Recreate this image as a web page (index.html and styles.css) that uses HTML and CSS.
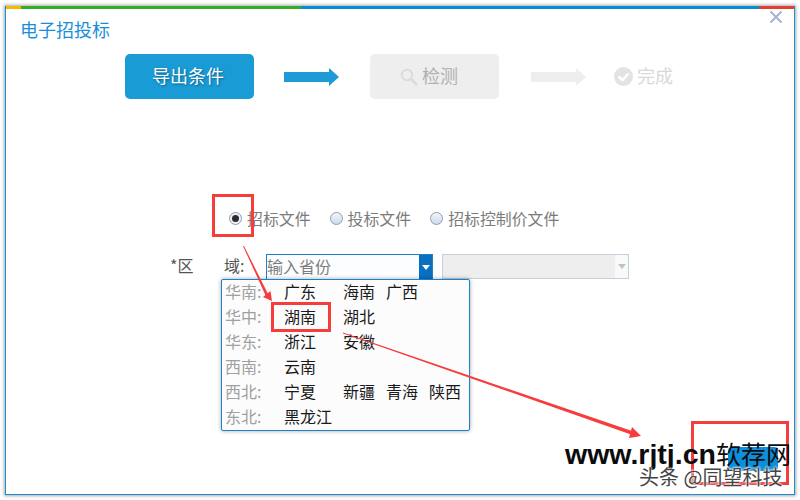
FILE: index.html
```html
<!DOCTYPE html>
<html lang="zh">
<head>
<meta charset="utf-8">
<title>电子招投标</title>
<link rel="stylesheet" href="styles.css">
</head>
<body>
<div class="window">
  <div class="strip"><i class="s-y"></i><i class="s-g"></i><i class="s-b"></i><i class="s-r"></i></div>
  <svg class="close" width="12" height="12" viewBox="0 0 12 12"><path d="M.5 .5L11.5 11.5M11.5 .5L.5 11.5" stroke="#a3b3d1" stroke-width="2"/></svg>
  <h1 class="title">电子招投标</h1>
  <div class="steps">
    <div class="step step-on"><span class="lift">导出条件</span></div>
    <svg class="arrow" width="55" height="18" viewBox="0 0 55 18"><path d="M0 4H45V0L55 9L45 18V14H0Z" fill="#1e9bd7"/></svg>
    <div class="step step-off">
      <svg width="18" height="18" viewBox="0 0 18 18"><circle cx="7" cy="7" r="5.2" fill="none" stroke="#dcdcdc" stroke-width="2"/><path d="M11 11L17 17" stroke="#dcdcdc" stroke-width="2.6"/></svg>
      <span class="lift">检测</span>
    </div>
    <svg class="arrow arrow-off" width="55" height="18" viewBox="0 0 55 18"><path d="M0 4H45V0L55 9L45 18V14H0Z" fill="#eeeeee"/></svg>
    <div class="done">
      <svg width="19" height="19" viewBox="0 0 19 19"><circle cx="9.5" cy="9.5" r="9.5" fill="#e3e3e3"/><path d="M4.5 9.5L8.5 13L14.5 6.5" fill="none" stroke="#fff" stroke-width="2.4"/></svg>
      <span class="lift">完成</span>
    </div>
  </div>
  <div class="radios">
    <label class="radio"><i class="dot dot-on"></i><span class="radio-text">招标文件</span></label>
    <label class="radio"><i class="dot"></i><span class="radio-text">投标文件</span></label>
    <label class="radio"><i class="dot"></i><span class="radio-text">招标控制价文件</span></label>
  </div>
  <div class="form-row">
    <span class="lab-a">*区</span>
    <span class="lab-b">域:</span>
    <div class="combo">
      <span class="combo-text">输入省份</span>
      <span class="combo-btn"><i class="tri"></i></span>
    </div>
    <div class="select-off"><span class="select-btn"><i class="tri tri-off"></i></span></div>
  </div>
  <div class="menu">
    <div class="m-row"><span class="m-lab">华南:</span><span class="c1">广东</span><span class="c2">海南</span><span class="c3">广西</span></div>
    <div class="m-row"><span class="m-lab">华中:</span><span class="c1">湖南</span><span class="c2">湖北</span></div>
    <div class="m-row"><span class="m-lab">华东:</span><span class="c1">浙江</span><span class="c2">安徽</span></div>
    <div class="m-row"><span class="m-lab">西南:</span><span class="c1">云南</span></div>
    <div class="m-row"><span class="m-lab">西北:</span><span class="c1">宁夏</span><span class="c2">新疆</span><span class="c3">青海</span><span class="c4">陕西</span></div>
    <div class="m-row"><span class="m-lab">东北:</span><span class="c1">黑龙江</span></div>
  </div>
  <div class="next"></div>
</div>
<svg class="marks" width="800" height="500" viewBox="0 0 800 500">
  <g fill="none" stroke="#f73c3c" stroke-width="3">
    <rect x="213.5" y="195.5" width="39" height="40"/>
    <rect x="272.5" y="303.5" width="57" height="27"/>
    <rect x="692.5" y="422.5" width="95" height="61"/>
  </g>
  <g fill="#f73c3c">
    <path d="M243 246L244 246L269 296L266.5 297.5Z"/>
    <path d="M272 301L263 297L270.5 291Z"/>
    <path d="M343 332.5L343 333.5L631 434.5L632 431Z"/>
    <path d="M641 436L632 427L629 438Z"/>
  </g>
</svg>
<div class="wm-main"><span class="wm-latin">www.rjtj.cn</span>软荐网</div>
<div class="wm-sub">头条 @同望科技</div>
</body>
</html>
```

FILE: styles.css
```css
* { box-sizing: border-box; }
html, body { margin: 0; padding: 0; background: #fff; }
body {
  width: 800px;
  height: 500px;
  overflow: hidden;
  padding: 6px 5px 5px;
  position: relative;
  font-family: "Microsoft YaHei", "Noto Sans CJK SC", sans-serif;
}
.window {
  position: relative;
  width: 790px;
  height: 489px;
  background: #fff;
  border: 1px solid #1a8fd8;
  border-top: 0;
  box-shadow: 0 0 3px 1px #a8a8a8;
}
.strip { display: flex; height: 3px; }
.strip i { display: block; height: 3px; }
.s-y { width: 15px; background: #f5b800; }
.s-g { width: 280px; background: #35ae27; }
.s-b { width: 458px; background: #0a8ad8; }
.s-r { width: 35px; background: #e23f30; }
.close { position: absolute; top: 5px; right: 12px; }
.title {
  margin: 0;
  padding: 7px 0 0 14px;
  height: 45px;
  font-size: 18px;
  line-height: 26px;
  font-weight: 400;
  color: #1a8fd8;
}
.steps {
  display: flex;
  align-items: center;
  height: 45px;
  padding-left: 119px;
}
.lift { display: block; margin-bottom: 4px; }
.step {
  width: 129px;
  height: 45px;
  border-radius: 5px;
  display: flex;
  align-items: center;
  font-size: 18px;
}
.step-on { background: #199bd6; color: #fff; text-shadow: 1px 1px 2px #0b5f8a; padding-left: 27px; }
.step-off { background: #eeeeee; color: #b0b0b0; gap: 4px; padding-left: 30px; }
.arrow { margin: 0 31px 0 30px; flex: none; }
.arrow-off { margin: 0 28px 0 32px; }
.done { display: flex; align-items: center; gap: 4px; font-size: 18px; color: #d8d8d8; }
.radios {
  display: flex;
  margin-top: 107px;
  height: 24px;
  align-items: center;
  padding-left: 223px;
  font-size: 15.9px;
  color: #7b7b7b;
}
.radio { display: flex; align-items: center; gap: 5px; margin-right: 19px; }
.radio-text { display: block; }
.dot {
  width: 13px;
  height: 13px;
  margin-top: 1px;
  border-radius: 50%;
  border: 1px solid #8d9db5;
  background: linear-gradient(#f4f6f9, #cdd9e8);
  display: flex;
  align-items: center;
  justify-content: center;
  flex: none;
}
.dot-on { background: #eef2f7; }
.dot-on::after {
  content: "";
  width: 7px;
  height: 7px;
  border-radius: 50%;
  background: #2d2d2d;
}
.form-row {
  display: flex;
  align-items: stretch;
  margin-top: 24px;
  height: 25px;
  font-size: 16px;
  line-height: 23px;
  color: #555;
}
.lab-a { margin-left: 164px; width: 54px; }
.lab-b { width: 42px; }
.combo {
  width: 167px;
  display: flex;
  justify-content: space-between;
  border: 1px solid #1a82c8;
  border-bottom: 0;
  background: #fbfdff;
}
.combo-text { color: #7d7d7d; line-height: 23px; }
.combo-btn {
  width: 13px;
  background: #0a6fc0;
  display: flex;
  align-items: center;
  justify-content: center;
}
.tri {
  width: 0;
  height: 0;
  border: 4px solid transparent;
  border-top: 5px solid #fff;
  border-bottom: 0;
}
.tri-off { border-top-color: #c2c2c2; }
.select-off {
  width: 187px;
  margin-left: 9px;
  border: 1px solid #c5d0da;
  background: #eeeeee;
  display: flex;
  justify-content: flex-end;
}
.select-btn {
  width: 13px;
  background: #f7f9fa;
  display: flex;
  align-items: center;
  justify-content: center;
}
.menu {
  position: absolute;
  left: 215px;
  top: 273px;
  width: 249px;
  height: 152px;
  border: 1px solid #1a82c8;
  border-radius: 2px;
  background: #fcfcfd;
  box-shadow: 0 0 4px rgba(0,0,0,.35);
  font-size: 16px;
  color: #1a1a1a;
}
.m-row { display: flex; height: 25px; line-height: 23px; padding-left: 3px; }
.m-lab { width: 59px; color: #a0a0a0; flex: none; }
.c1 { width: 59px; flex: none; }
.c2 { width: 43px; flex: none; }
.c3 { width: 43px; flex: none; }
.next {
  position: absolute;
  left: 722px;
  top: 441px;
  width: 50px;
  height: 24px;
  border-radius: 4px;
  background: #0d8fdc;
}
.marks { position: absolute; left: 0; top: 0; }
.wm-main {
  position: absolute;
  left: 565px;
  top: 436px;
  font-family: "Liberation Sans", "Noto Sans CJK SC", sans-serif;
  font-size: 25px;
  line-height: 36px;
  color: #0c0c0c;
  white-space: nowrap;
}
.wm-latin { font-size: 28.5px; font-weight: 700; }
.wm-sub {
  position: absolute;
  left: 639px;
  top: 464px;
  font-size: 20px;
  line-height: 26px;
  color: #444;
  text-shadow: 0 0 2px #fff, 0 0 2px #fff, 0 0 3px #fff;
  white-space: nowrap;
}
```
